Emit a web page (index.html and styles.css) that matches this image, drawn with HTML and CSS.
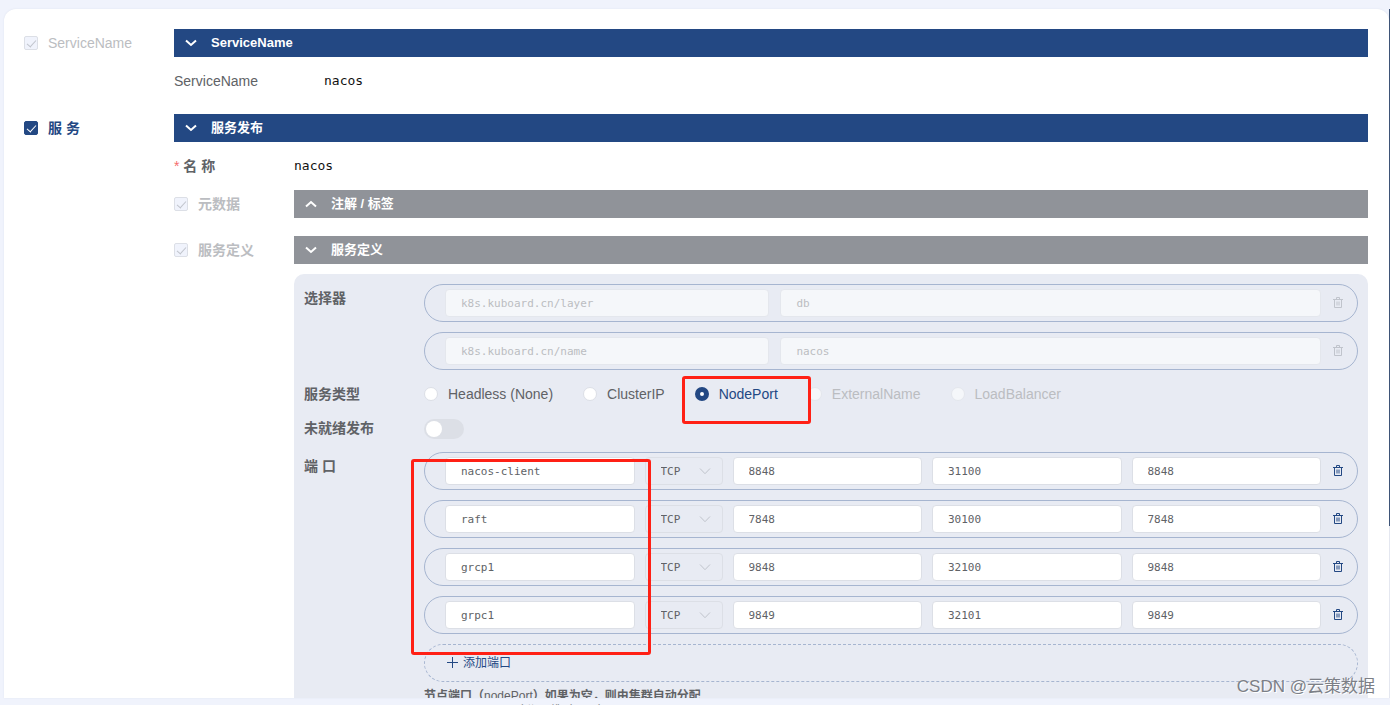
FILE: index.html
```
<!DOCTYPE html>
<html lang="zh-CN">
<head>
<meta charset="utf-8">
<title>服务发布</title>
<link rel="stylesheet" href="styles.css">
</head>
<body>
<svg class="defs" aria-hidden="true">
  <symbol id="down" viewBox="0 0 12 12"><path d="M1 3.500 6 8 11 3.500" fill="none" stroke="currentColor" stroke-width="2"/></symbol>
  <symbol id="up" viewBox="0 0 12 12"><path d="M1 8.500 6 4 11 8.500" fill="none" stroke="currentColor" stroke-width="2"/></symbol>
  <symbol id="thin" viewBox="0 0 12 12"><path d="M1 3.5 6 8.7 11 3.5" fill="none" stroke="currentColor" stroke-width="1"/></symbol>
  <symbol id="plus" viewBox="0 0 12 12"><path d="M5.500 0V11M0 5.500H11" fill="none" stroke="currentColor" stroke-width="1"/></symbol>
  <symbol id="trash" viewBox="0 0 12 12"><path d="M1 2.5H11M4.5 2.5V.5H7.5V2.5M2.5 2.5V10.5H9.5V2.5M5 4.500V8.500M7 4.500V8.500" fill="none" stroke="currentColor" stroke-width="1"/></symbol>
</svg>
<div class="page">
  <main class="card">
    <section class="section">
      <label class="check check-off"><input type="checkbox" checked disabled>ServiceName</label>
      <div class="body">
        <button class="bar" type="button"><svg><use href="#down"/></svg>ServiceName</button>
        <div class="field field-wide"><span>ServiceName</span><span class="mono">nacos</span></div>
      </div>
    </section>
    <section class="section section-service">
      <label class="check check-on"><input type="checkbox" checked>服 务</label>
      <div class="body">
        <button class="bar" type="button"><svg><use href="#down"/></svg>服务发布</button>
        <div class="field field-name"><b><span class="star">*</span> 名 称</b><span class="mono">nacos</span></div>
        <div class="sub">
          <label class="check check-off strong"><input type="checkbox" checked disabled>元数据</label>
          <button class="bar bar-gray" type="button"><svg><use href="#up"/></svg>注解 / 标签</button>
        </div>
        <div class="sub sub-next">
          <label class="check check-off strong"><input type="checkbox" checked disabled>服务定义</label>
          <div>
            <button class="bar bar-gray" type="button"><svg><use href="#down"/></svg>服务定义</button>
            <div class="panel">
              <div class="row">
                <b class="row-label">选择器</b>
                <div class="stack">
                  <div class="pill"><div class="pair"><input class="box" disabled value="k8s.kuboard.cn/layer" aria-label="键"><input class="box" disabled value="db" aria-label="值"></div><button class="trash" type="button" disabled aria-label="删除"><svg><use href="#trash"/></svg></button></div>
                  <div class="pill"><div class="pair"><input class="box" disabled value="k8s.kuboard.cn/name" aria-label="键"><input class="box" disabled value="nacos" aria-label="值"></div><button class="trash" type="button" disabled aria-label="删除"><svg><use href="#trash"/></svg></button></div>
                </div>
              </div>
              <div class="row row-type">
                <b>服务类型</b>
                <div class="radios">
                  <label><input type="radio" name="type">Headless (None)</label>
                  <label><input type="radio" name="type">ClusterIP</label>
                  <label class="chosen"><input type="radio" name="type" checked>NodePort</label>
                  <label class="dim"><input type="radio" name="type" disabled>ExternalName</label>
                  <label class="dim"><input type="radio" name="type" disabled>LoadBalancer</label>
                </div>
              </div>
              <div class="row row-switch">
                <label for="unready"><b>未就绪发布</b></label>
                <input class="switch" id="unready" type="checkbox">
              </div>
              <div class="row">
                <b class="row-label">端 口</b>
                <div class="stack">
                  <div class="pill"><div class="port"><input class="box" value="nacos-client" aria-label="名称"><span class="pick"><select disabled aria-label="协议"><option>TCP</option></select><svg><use href="#thin"/></svg></span><input class="box" value="8848" aria-label="服务端口"><input class="box" value="31100" aria-label="节点端口"><input class="box" value="8848" aria-label="容器端口"></div><button class="trash" type="button" aria-label="删除"><svg><use href="#trash"/></svg></button></div>
                  <div class="pill"><div class="port"><input class="box" value="raft" aria-label="名称"><span class="pick"><select disabled aria-label="协议"><option>TCP</option></select><svg><use href="#thin"/></svg></span><input class="box" value="7848" aria-label="服务端口"><input class="box" value="30100" aria-label="节点端口"><input class="box" value="7848" aria-label="容器端口"></div><button class="trash" type="button" aria-label="删除"><svg><use href="#trash"/></svg></button></div>
                  <div class="pill"><div class="port"><input class="box" value="grcp1" aria-label="名称"><span class="pick"><select disabled aria-label="协议"><option>TCP</option></select><svg><use href="#thin"/></svg></span><input class="box" value="9848" aria-label="服务端口"><input class="box" value="32100" aria-label="节点端口"><input class="box" value="9848" aria-label="容器端口"></div><button class="trash" type="button" aria-label="删除"><svg><use href="#trash"/></svg></button></div>
                  <div class="pill"><div class="port"><input class="box" value="grpc1" aria-label="名称"><span class="pick"><select disabled aria-label="协议"><option>TCP</option></select><svg><use href="#thin"/></svg></span><input class="box" value="9849" aria-label="服务端口"><input class="box" value="32101" aria-label="节点端口"><input class="box" value="9849" aria-label="容器端口"></div><button class="trash" type="button" aria-label="删除"><svg><use href="#trash"/></svg></button></div>
                  <button class="pill add" type="button"><svg><use href="#plus"/></svg>添加端口</button>
                </div>
              </div>
              <p class="hint">节点端口（<span>nodePort</span>）如果为空，则由集群自动分配</p>
            </div>
          </div>
        </div>
      </div>
    </section>
  </main>
  <div class="track"><div class="thumb"></div></div>
</div>
<footer class="footer">https://kuboard.cn</footer>
<div class="mark mark-type"></div>
<div class="mark mark-ports"></div>
<div class="watermark">CSDN @云策数据</div>
</body>
</html>
```
FILE: styles.css
```
* { box-sizing: border-box; }
body {
  margin: 0;
  height: 100vh;
  padding: 9px 0 0 4px;
  display: flex;
  flex-direction: column;
  overflow: hidden;
  position: relative;
  background: #f0f3fc;
  color: #606266;
  font: 14px/20px "Liberation Sans", "Noto Sans CJK SC", sans-serif;
}
.defs { position: absolute; width: 0; height: 0; }
svg { width: 12px; height: 12px; flex: none; }
button { font: inherit; cursor: pointer; }
.page { flex: 1; min-height: 0; display: flex; }
.card {
  flex: 1;
  min-width: 0;
  overflow: hidden;
  padding: 20px 21px 0 20px;
  background: #fff;
  border-radius: 12px 12px 0 0;
  box-shadow: 0 0 2px #dde2ee;
}
.track { width: 1px; background: #e4e7f0; }
.thumb { height: 75%; background: #3e5477; }
.section, .sub { display: grid; grid-template-columns: 150px minmax(0, 1fr); }
.section-service { margin-top: 23px; }
.sub { grid-template-columns: 120px minmax(0, 1fr); margin-top: 14px; }
.sub-next { margin-top: 18px; }
.check { display: flex; align-items: center; height: 28px; gap: 10px; }
.check-off { color: #bbbdc1; }
.check-on { color: #234883; font-weight: bold; }
.strong { font-weight: bold; }
.check input {
  appearance: none;
  width: 14px;
  height: 14px;
  margin: 0;
  border: 1px solid #dcdfe6;
  border-radius: 2px;
  background: #f0f3fc;
  display: grid;
  place-items: center;
  color: #c0c4cc;
}
.check input::before {
  content: "";
  width: 8px;
  height: 4px;
  margin-bottom: 2px;
  border: solid currentColor;
  border-width: 0 0 1px 1px;
  transform: rotate(-48deg);
}
.check-on input { background: #234883; border-color: #234883; color: #fff; }
.bar {
  width: 100%;
  height: 28px;
  padding: 0 11px 1px;
  border: 0;
  display: flex;
  align-items: center;
  gap: 14px;
  background: #234883;
  color: #fff;
  font-size: 13px;
  line-height: 19px;
  font-weight: bold;
}
.bar-gray { background: #909399; }
.field { display: grid; align-items: center; height: 20px; }
.field-wide { grid-template-columns: 150px 1fr; margin-top: 14px; }
.field-name { grid-template-columns: 120px 1fr; margin-top: 14px; }
.star { color: #f56c6c; font-weight: normal; }
.mono { color: #111; font: 13px/20px "DejaVu Sans Mono", monospace; }
.panel { margin-top: 10px; padding: 10px; border-radius: 10px; background: #e8ebf3; }
.row { display: grid; grid-template-columns: 120px minmax(0, 1fr); }
.row-label { padding-top: 4px; }
.row-type { margin-top: 14px; }
.row-switch { margin: 14px 0 13px; }
.row-switch .switch { margin-top: 1px; }
.stack { display: grid; gap: 10px; }
.pill {
  height: 38px;
  padding-left: 20px;
  border: 1px solid #a6b5d0;
  border-radius: 19px;
  display: flex;
  align-items: center;
}
.pair, .port { flex: 1; min-width: 0; display: grid; gap: 10px; }
.pair { grid-template-columns: 3fr 5fr; gap: 11px; }
.port { grid-template-columns: minmax(0, 1fr) 78px repeat(3, minmax(0, 1fr)); }
.box, .pick select {
  width: 100%;
  min-width: 0;
  height: 28px;
  padding: 0 15px;
  border: 1px solid #dcdfe6;
  border-radius: 4px;
  background: #fff;
  color: #606266;
  font: 11px "DejaVu Sans Mono", monospace;
}
.box:disabled { background: #f5f7fa; border-color: #e4e7ed; color: #bbbdc1; }
.pick { display: grid; align-items: center; color: #c0c4cc; }
.pick select { appearance: none; grid-area: 1 / 1; background: transparent; opacity: 1; }
.pick svg { grid-area: 1 / 1; justify-self: end; margin-right: 12px; }
.trash {
  width: 36px;
  height: 28px;
  padding: 0 2px 0 0;
  border: 0;
  background: none;
  color: #234883;
  display: grid;
  place-items: center;
}
.trash:disabled { color: #c0c4cc; }
.add {
  width: 100%;
  padding-left: 22px;
  gap: 4px;
  border-style: dashed;
  background: none;
  color: #234883;
  font-size: 12px;
}
.radios { display: flex; gap: 30px; white-space: nowrap; }
.radios label { display: flex; align-items: center; gap: 10px; }
.radios input {
  appearance: none;
  width: 14px;
  height: 14px;
  margin: 0;
  border: 1px solid #dcdfe6;
  border-radius: 50%;
  background: #fff;
}
.radios input:checked { border: 5px solid #234883; }
.radios .chosen { color: #234883; }
.radios .dim { color: #bbbdc1; }
.radios .dim input { background: #f5f7fa; border-color: #e4e7ed; }
.switch {
  appearance: none;
  width: 40px;
  height: 20px;
  margin: 0;
  padding: 2px;
  border-radius: 10px;
  background: #dcdfe6;
}
.switch::before { content: ""; display: block; width: 16px; height: 16px; border-radius: 50%; background: #fff; }
.hint { margin: 4px 0 0 120px; font-size: 12px; font-weight: bold; }
.hint span { font-weight: normal; }
.footer {
  height: 7px;
  padding: 4px 0 0 517px;
  overflow: hidden;
  color: #909399;
  font-size: 12px;
  line-height: 14px;
}
.mark { position: absolute; border: 3px solid #ff2015; border-radius: 3px; pointer-events: none; }
.mark-type { left: 682px; top: 376px; width: 129px; height: 48px; }
.mark-ports { left: 411px; top: 459px; width: 240px; height: 196px; }
.watermark {
  position: absolute;
  right: 15px;
  bottom: 6px;
  color: #7c7f86;
  font-size: 17px;
  line-height: 24px;
  text-shadow: 1px 1px 0 #fff;
}
```
